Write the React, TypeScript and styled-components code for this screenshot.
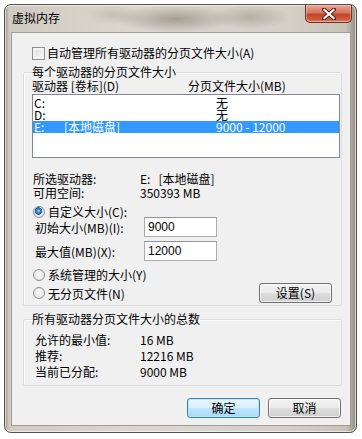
import styled, { createGlobalStyle } from "styled-components";

const GlobalStyle = createGlobalStyle`
  html, body {
    margin: 0;
    padding: 0;
    background: #ffffff;
  }
  body {
    font-family: "Noto Sans CJK SC", "Liberation Sans", sans-serif;
    font-size: 12px;
    color: #000;
  }
`;

interface Drive {
  letter: string;
  label: string;
  size: string;
  selected?: boolean;
}

const drives: Drive[] = [
  { letter: "C:", label: "", size: "无" },
  { letter: "D:", label: "", size: "无" },
  { letter: "E:", label: "[本地磁盘]", size: "9000 - 12000", selected: true },
];

const totals = [
  { label: "允许的最小值:", value: "16 MB" },
  { label: "推荐:", value: "12216 MB" },
  { label: "当前已分配:", value: "9000 MB" },
];

function CloseIcon() {
  return (
    <svg width="14" height="12" viewBox="0 0 14 12">
      <path
        d="M2 1.5 L12 10.5 M12 1.5 L2 10.5"
        stroke="#5a2016"
        strokeWidth="4"
        strokeLinecap="square"
      />
      <path
        d="M2.5 2 L11.5 10 M11.5 2 L2.5 10"
        stroke="#ffffff"
        strokeWidth="2.2"
        strokeLinecap="square"
      />
    </svg>
  );
}

function App() {
  return (
    <>
      <GlobalStyle />
      <Window>
        <TitleBar>
          <Title>虚拟内存</Title>
          <CloseBtn>
            <CloseIcon />
          </CloseBtn>
        </TitleBar>

        <Client>
          <CheckRow>
            <CheckBox />
            <span>自动管理所有驱动器的分页文件大小(A)</span>
          </CheckRow>

          <Group $top={5}>
            <Legend>每个驱动器的分页文件大小</Legend>
            <HeaderRow>
              <span>驱动器 [卷标](D)</span>
              <span>分页文件大小(MB)</span>
            </HeaderRow>
            <ListBox>
              {drives.map((d) => (
                <DriveRow key={d.letter} $selected={d.selected}>
                  <span>{d.letter}</span>
                  <span>{d.label}</span>
                  <span>{d.size}</span>
                </DriveRow>
              ))}
            </ListBox>

            <InfoList>
              <InfoRow>
                <span>所选驱动器:</span>
                <span>E:&nbsp;&nbsp;&nbsp;[本地磁盘]</span>
              </InfoRow>
              <InfoRow>
                <span>可用空间:</span>
                <span>350393 MB</span>
              </InfoRow>
            </InfoList>

            <RadioRow $top={6}>
              <Radio $checked />
              <span>自定义大小(C):</span>
            </RadioRow>
            <FieldRow $top={-1}>
              <span>初始大小(MB)(I):</span>
              <TextInput defaultValue="9000" />
            </FieldRow>
            <FieldRow $top={4}>
              <span>最大值(MB)(X):</span>
              <TextInput defaultValue="12000" />
            </FieldRow>
            <RadioRow $top={8}>
              <Radio />
              <span>系统管理的大小(Y)</span>
            </RadioRow>
            <LastRow>
              <RadioLabel>
                <Radio />
                <span>无分页文件(N)</span>
              </RadioLabel>
              <Button>设置(S)</Button>
            </LastRow>
          </Group>

          <Group $top={6}>
            <Legend>所有驱动器分页文件大小的总数</Legend>
            <TotalList>
              {totals.map((t) => (
                <TotalRow key={t.label}>
                  <span>{t.label}</span>
                  <span>{t.value}</span>
                </TotalRow>
              ))}
            </TotalList>
          </Group>

          <ButtonBar>
            <Button $default>确定</Button>
            <Button>取消</Button>
          </ButtonBar>
        </Client>
      </Window>
    </>
  );
}

export default App;

const Window = styled.div`
  margin: 4px 0 0 4px;
  width: 353px;
  height: 429px;
  box-sizing: border-box;
  border: 1px solid #55524c;
  border-radius: 7px;
  padding: 0 5px 7px 6px;
  background:
    radial-gradient(ellipse 60px 14px at 170px 14px, rgba(120, 112, 98, 0.55), transparent),
    radial-gradient(ellipse 40px 12px at 245px 12px, rgba(140, 132, 118, 0.45), transparent),
    radial-gradient(ellipse 30px 10px at 110px 10px, rgba(160, 152, 140, 0.35), transparent),
    linear-gradient(to right, #9c968a 0px, #cfcbc2 4px, #dcd8d0 40%, #d4d0c7 80%, #c9c4ba 97%, #948e82 100%);
  box-shadow: inset 0 0 0 1px rgba(255, 255, 255, 0.6);
`;

const TitleBar = styled.div`
  height: 27px;
  display: flex;
  justify-content: space-between;
  align-items: flex-start;
`;

const Title = styled.span`
  margin: 6px 0 0 1px;
  font-size: 12px;
  line-height: 14px;
  color: #000;
`;

const CloseBtn = styled.div`
  width: 47px;
  height: 18px;
  margin-right: -1px;
  box-sizing: border-box;
  border: 1px solid #6b3226;
  border-top: none;
  border-radius: 0 0 5px 5px;
  display: flex;
  align-items: center;
  justify-content: center;
  background: linear-gradient(
    to bottom,
    #e9a898 0%,
    #d8735e 45%,
    #c0452c 55%,
    #cf5a3e 85%,
    #e28a6a 100%
  );
  box-shadow: inset 0 0 0 1px rgba(255, 210, 200, 0.45);
`;

const Client = styled.div`
  width: 340px;
  height: 394px;
  box-sizing: border-box;
  border: 1px solid #a29d92;
  background: #f0f0f0;
  display: flex;
  flex-direction: column;
`;

const CheckRow = styled.div`
  margin: 13px 0 0 20px;
  height: 14px;
  display: flex;
  align-items: center;
  gap: 2px;
  line-height: 14px;
`;

const CheckBox = styled.span`
  width: 13px;
  height: 13px;
  box-sizing: border-box;
  border: 1px solid #8e8f8f;
  background: linear-gradient(135deg, #dcdcdc, #fbfbfb);
  box-shadow: inset 0 0 0 2px #f4f4f4;
`;

const Group = styled.fieldset<{ $top: number }>`
  margin: ${(p) => p.$top}px 0 0 11px;
  width: 319px;
  box-sizing: border-box;
  padding: 0 0 2px 8px;
  border: 1px solid #dcdcdc;
  border-radius: 2px;
  box-shadow: inset 1px 1px 0 #fbfbfb;
  min-width: 0;
  &:last-of-type {
    padding-bottom: 5px;
  }
`;

const Legend = styled.legend`
  padding: 0;
  line-height: 14px;
  font-size: 12px;
`;

const HeaderRow = styled.div`
  display: grid;
  grid-template-columns: 156px 1fr;
  line-height: 14px;
`;

const ListBox = styled.div`
  margin: 1px 1px 0 0;
  height: 64px;
  box-sizing: border-box;
  border: 1px solid #828790;
  background: #ffffff;
  padding: 2px 0 0;
`;

const DriveRow = styled.div<{ $selected?: boolean }>`
  display: grid;
  grid-template-columns: 30px 152px 1fr;
  height: 12px;
  line-height: 12px;
  padding-left: 1px;
  background: ${(p) => (p.$selected ? "#3399ff" : "transparent")};
  color: ${(p) => (p.$selected ? "#ffffff" : "#000000")};
`;

const InfoList = styled.div`
  margin-top: 14px;
`;

const InfoRow = styled.div`
  display: grid;
  grid-template-columns: 107px 1fr;
  padding-left: 1px;
  line-height: 14px;
`;

const RadioRow = styled.div<{ $top: number }>`
  margin-top: ${(p) => p.$top}px;
  padding-left: 1px;
  height: 12px;
  line-height: 12px;
  display: flex;
  align-items: center;
  gap: 3px;
`;

const RadioLabel = styled.div`
  display: flex;
  align-items: center;
  gap: 3px;
  padding-left: 1px;
`;

const Radio = styled.span<{ $checked?: boolean }>`
  width: 12px;
  height: 12px;
  box-sizing: border-box;
  border-radius: 50%;
  border: 1px solid #8c8e90;
  background: ${(p) =>
    p.$checked
      ? "radial-gradient(circle at 45% 40%, #8fd1ff 0, #2a74c4 2.5px, #1c4f8c 3.5px, #e8e8e8 4px, #f6f6f6 100%)"
      : "radial-gradient(circle at 50% 45%, #f8f8f8 0, #dedede 100%)"};
`;

const FieldRow = styled.div<{ $top: number }>`
  margin-top: ${(p) => p.$top}px;
  display: grid;
  grid-template-columns: 109px 73px;
  align-items: center;
  padding-left: 3px;
  height: 20px;
`;

const TextInput = styled.input`
  width: 73px;
  height: 20px;
  box-sizing: border-box;
  border: 1px solid #abadb3;
  border-top-color: #8f9296;
  padding: 0 3px;
  font-family: "Liberation Sans", "Noto Sans CJK SC", sans-serif;
  font-size: 12px;
  color: #000;
  background: #ffffff;
  outline: none;
`;

const LastRow = styled.div`
  margin-top: 2px;
  height: 20px;
  display: flex;
  align-items: center;
  justify-content: space-between;
  padding-right: 9px;
`;

const Button = styled.button<{ $default?: boolean }>`
  width: 73px;
  height: 20px;
  box-sizing: border-box;
  padding: 0;
  font-family: "Noto Sans CJK SC", "Liberation Sans", sans-serif;
  font-size: 12px;
  line-height: 14px;
  color: #000;
  border-radius: 3px;
  border: 1px solid ${(p) => (p.$default ? "#3c7fb1" : "#707070")};
  background: ${(p) =>
    p.$default
      ? "linear-gradient(to bottom, #eaf6fd 0%, #d9f0fc 50%, #bee6fd 51%, #a7d9f5 100%)"
      : "linear-gradient(to bottom, #f2f2f2 0%, #ebebeb 50%, #dddddd 51%, #cfcfcf 100%)"};
  box-shadow: inset 0 0 0 1px
    ${(p) => (p.$default ? "rgba(180, 230, 255, 0.9)" : "rgba(255, 255, 255, 0.7)")};
`;

const TotalList = styled.div`
  padding-top: 6px;
`;

const TotalRow = styled.div`
  display: grid;
  grid-template-columns: 105px 1fr;
  padding-left: 3px;
  height: 16px;
  line-height: 16px;
`;

const ButtonBar = styled.div`
  margin: 12px 9px 0 0;
  display: flex;
  justify-content: flex-end;
  gap: 8px;
`;
